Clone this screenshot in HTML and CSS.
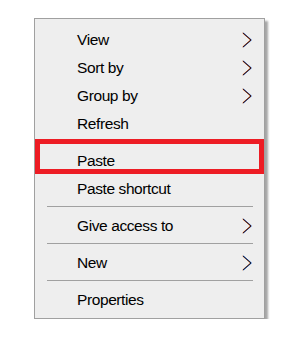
FILE: index.html
```html
<!DOCTYPE html>
<html lang="en">
<head>
    <meta charset="UTF-8">
    <meta name="viewport" content="width=device-width, initial-scale=1.0">
    <title>Context menu</title>
    <link rel="stylesheet" href="styles.css">
</head>
<body>

    <div class="menu">

        <div class="menu-item">
            <span class="label">View</span>
            <svg class="arrow" width="12" height="16" viewBox="0 0 12 16"><polyline class="fringe-a" points="1.5,1 9.5,8 1.5,15"/><polyline class="fringe-b" points="2.5,1 10.5,8 2.5,15"/><polyline class="core" points="2,1 10,8 2,15"/></svg>
        </div>
        <div class="menu-item">
            <span class="label">Sort by</span>
            <svg class="arrow" width="12" height="16" viewBox="0 0 12 16"><polyline class="fringe-a" points="1.5,1 9.5,8 1.5,15"/><polyline class="fringe-b" points="2.5,1 10.5,8 2.5,15"/><polyline class="core" points="2,1 10,8 2,15"/></svg>
        </div>
        <div class="menu-item">
            <span class="label">Group by</span>
            <svg class="arrow" width="12" height="16" viewBox="0 0 12 16"><polyline class="fringe-a" points="1.5,1 9.5,8 1.5,15"/><polyline class="fringe-b" points="2.5,1 10.5,8 2.5,15"/><polyline class="core" points="2,1 10,8 2,15"/></svg>
        </div>
        <div class="menu-item">
            <span class="label">Refresh</span>
        </div>

        <div class="sep"></div>

        <div class="menu-item">
            <span class="label">Paste</span>
        </div>
        <div class="menu-item">
            <span class="label">Paste shortcut</span>
        </div>

        <div class="sep"></div>

        <div class="menu-item">
            <span class="label">Give access to</span>
            <svg class="arrow" width="12" height="16" viewBox="0 0 12 16"><polyline class="fringe-a" points="1.5,1 9.5,8 1.5,15"/><polyline class="fringe-b" points="2.5,1 10.5,8 2.5,15"/><polyline class="core" points="2,1 10,8 2,15"/></svg>
        </div>

        <div class="sep"></div>

        <div class="menu-item">
            <span class="label">New</span>
            <svg class="arrow blue" width="12" height="16" viewBox="0 0 12 16"><polyline class="fringe-a" points="1.5,1 9.5,8 1.5,15"/><polyline class="fringe-b" points="2.5,1 10.5,8 2.5,15"/><polyline class="core" points="2,1 10,8 2,15"/></svg>
        </div>

        <div class="sep"></div>

        <div class="menu-item">
            <span class="label">Properties</span>
        </div>

        <!-- highlight drawn over the Paste entry -->
        <div class="mark"></div>

    </div>

</body>
</html>
```

FILE: styles.css
```css
:root{
    --colbg: #fff;
    --colmenu: #eeeeee;
    --colborder: #a0a0a0;
    --colsep: #a0a0a0;
    --colmark: #ed1c24;
}
body{
    margin: 0;
    background: var(--colbg);
    color: #000;

    font-family: "Liberation Sans", Arial, sans-serif;
    font-size: 15.5px;
    letter-spacing: -0.4px;
}
.menu{
    position: relative;
    box-sizing: border-box;
    width: 231px;
    height: 301px;
    margin: 18px 0 0 34px;
    padding: 7px 0 3px 0;

    background: var(--colmenu);
    border: 1px solid var(--colborder);
    box-shadow: 3px 3px 2px rgba(0, 0, 0, 0.35);
}
.menu-item{
    display: flex;
    align-items: center;
    justify-content: space-between;
    height: 28px;
    padding: 0 11px 0 42px;
}
.menu-item .arrow{
    display: block;
}
.arrow polyline{
    fill: none;
    stroke-width: 1;
}
.arrow .fringe-a{
    stroke: #e07020;
}
.arrow .fringe-b{
    stroke: #2a6fd6;
}
.arrow .core{
    stroke: #3a0d0d;
}
.arrow.blue .core{
    stroke: #0d1a3a;
}
.sep{
    height: 9px;
    display: flex;
    align-items: flex-start;
    padding: 0 11px 0 12px;
}
.sep::before{
    content: "";
    flex: 1;
    margin-top: 3px;
    border-top: 1px solid var(--colsep);
}
.mark{
    position: absolute;
    top: 120px;
    left: 0;
    box-sizing: border-box;
    width: 229px;
    height: 35px;
    border: 5px solid var(--colmark);
}
```
